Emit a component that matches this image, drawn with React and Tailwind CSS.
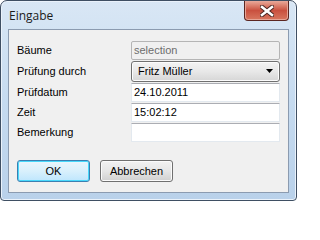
import React from "react";

const rows = [
  { label: "Bäume", kind: "disabled", value: "selection" },
  { label: "Prüfung durch", kind: "select", value: "Fritz Müller" },
  { label: "Prüfdatum", kind: "text", value: "24.10.2011" },
  { label: "Zeit", kind: "text", value: "15:02:12" },
  { label: "Bemerkung", kind: "text", value: "" },
];

const Field = ({ kind, value }) => {
  if (kind === "disabled") {
    return (
      <div className="h-[19px] w-[150px] rounded-[2px] border border-[#b5b5b5] bg-[#f0f0f0] px-[2px] leading-[17px] text-[#6d6d6d]">
        {value}
      </div>
    );
  }
  if (kind === "select") {
    return (
      <div className="flex h-[21px] w-[150px] items-center justify-between rounded-[3px] border border-[#707070] bg-gradient-to-b from-[#f3f3f3] via-[#e8e8e8] to-[#d6d6d6] pl-[6px] pr-[5px] shadow-[inset_0_0_0_1px_#fcfcfc]">
        <span>{value}</span>
        <svg width="8" height="5" viewBox="0 0 8 5">
          <path d="M0 0H7L3.5 4Z" fill="#000" />
        </svg>
      </div>
    );
  }
  return (
    <div className="h-[19px] w-[150px] border border-[#e3e9ef] border-t-[#abadb3] bg-white px-[2px] leading-[17px]">
      {value}
    </div>
  );
};

const CloseButton = () => (
  <div className="flex h-[20px] w-[45px] items-center justify-center rounded-b-[4px] border border-t-0 border-[#5b2621] bg-gradient-to-b from-[#e9a99a] via-[#c9503f] to-[#d8765f] shadow-[inset_0_0_0_1px_#e6a597]">
    <svg width="14" height="12" viewBox="0 0 14 12">
      <path d="M2 2L12 10M12 2L2 10" stroke="#4a2420" strokeWidth="4.5" strokeLinecap="square" />
      <path d="M2 2L12 10M12 2L2 10" stroke="#ffffff" strokeWidth="2.6" strokeLinecap="square" />
    </svg>
  </div>
);

export default function App() {
  return (
    <div className="h-[201px] w-[297px] bg-white">
      <div className="flex h-[201px] w-[297px] flex-col rounded-t-[7px] rounded-b-[4px] border border-[#3f4f63] bg-gradient-to-b from-[#d9e7f5] via-[#c6dbf0] to-[#b9d1ea] shadow-[inset_0_0_0_1px_#eaf2fb]">
        <div className="flex h-[28px] shrink-0 items-start justify-between pl-[8px] pr-[7px]">
          <span className="pt-[7px] text-[12px] leading-[16px] text-[#1b1b1b] [font-family:'Open_Sans','Noto_Sans',sans-serif]">
            Eingabe
          </span>
          <CloseButton />
        </div>
        <div className="mx-[7px] mb-[7px] flex flex-1 flex-col border border-[#8b9bb0] bg-[#f0f0f0] px-[8px] pt-[11px] text-[11px] text-black [font-family:'Liberation_Sans',Arial,sans-serif]">
          <div className="flex flex-col gap-[1px]">
            {rows.map((row) => (
              <div key={row.label} className="flex items-center">
                <span className="w-[114px] shrink-0">{row.label}</span>
                <Field kind={row.kind} value={row.value} />
              </div>
            ))}
          </div>
          <div className="mt-[18px] flex gap-[10px]">
            <div className="flex h-[22px] w-[73px] items-center justify-center rounded-[3px] border border-[#3c7fb1] bg-gradient-to-b from-[#eaf6fd] via-[#d9f0fc] to-[#bee6fd] shadow-[inset_0_0_0_1px_#48d8fb]">
              OK
            </div>
            <div className="flex h-[22px] w-[73px] items-center justify-center rounded-[3px] border border-[#707070] bg-gradient-to-b from-[#f2f2f2] via-[#e6e6e6] to-[#d0d0d0] shadow-[inset_0_0_0_1px_#fbfbfb]">
              Abbrechen
            </div>
          </div>
        </div>
      </div>
    </div>
  );
}
